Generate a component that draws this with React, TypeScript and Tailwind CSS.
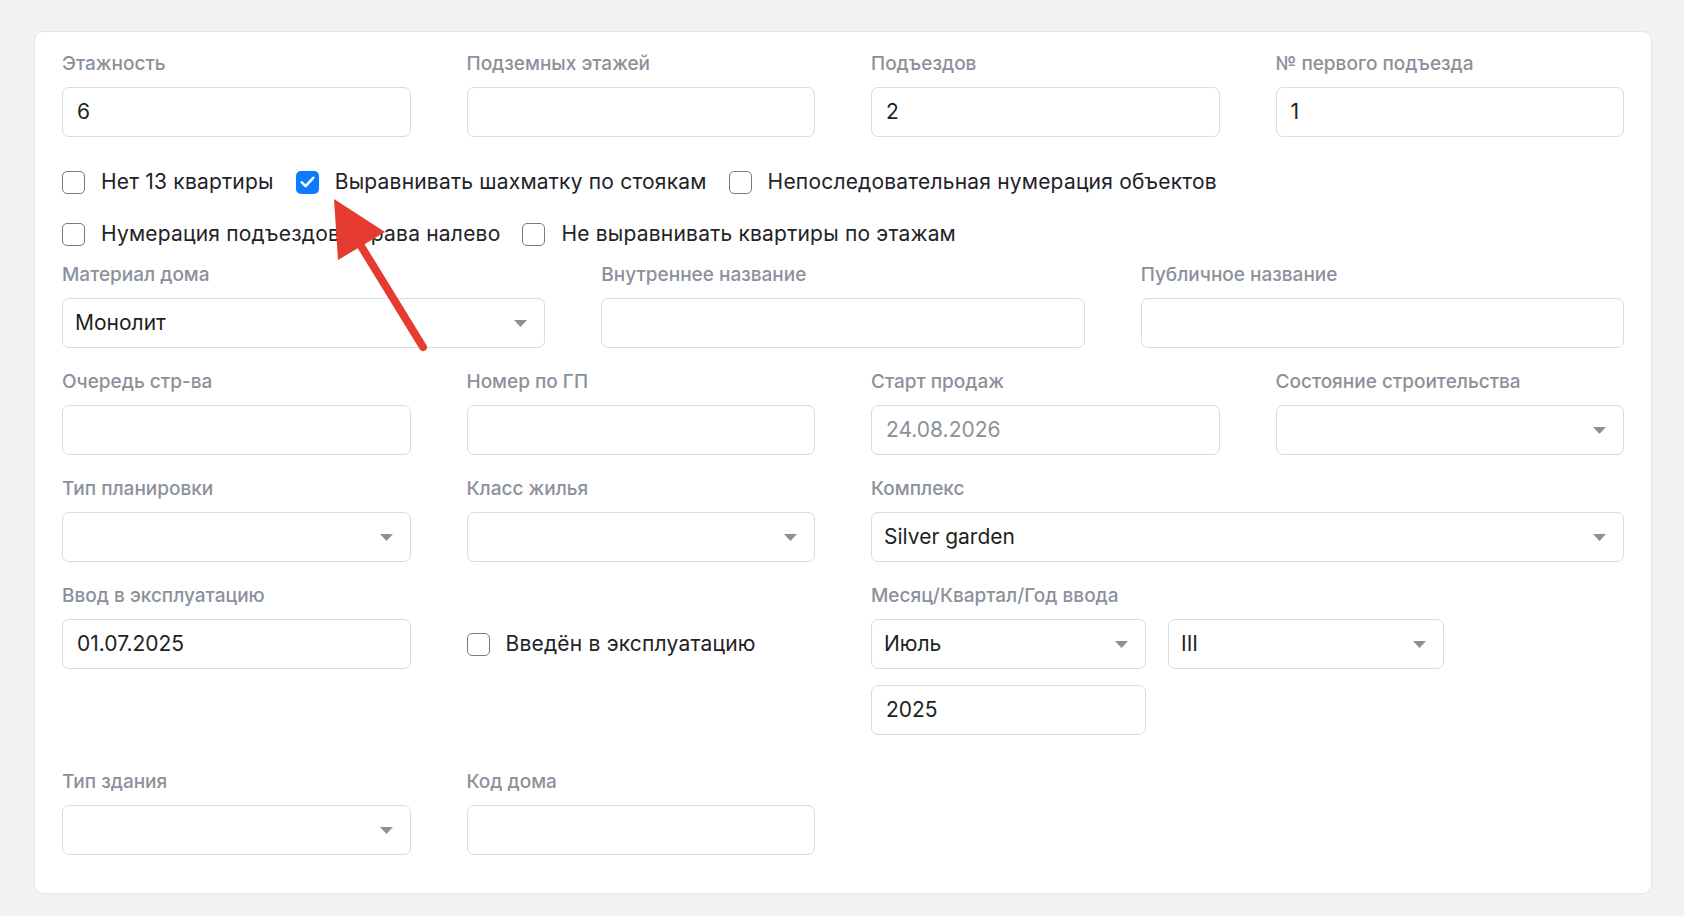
import type { ReactNode } from "react";

const font = { fontFamily: "Inter, 'Noto Sans', sans-serif" };

function Label({ children }: { children: ReactNode }) {
    return <div className="text-[19px] leading-[24px] font-medium text-[#8b919b] whitespace-nowrap">{children}</div>;
}

function Input({ value, muted, className = "" }: { value?: string; muted?: boolean; className?: string }) {
    return (
        <div
            className={`h-[50px] rounded-[7px] border-[1.5px] border-[#d9dbdf] bg-white px-[14px] flex items-center text-[21px] ${
                muted ? "text-[#8c9097]" : "text-[#1d1f23]"
            } ${className}`}
        >
            {value}
        </div>
    );
}

function Select({ value, className = "" }: { value?: string; className?: string }) {
    return (
        <div
            className={`h-[50px] rounded-[7px] border-[1.5px] border-[#d9dbdf] bg-white pl-[12px] pr-[17px] flex items-center justify-between text-[21px] text-[#1d1f23] ${className}`}
        >
            <span>{value}</span>
            <svg width="13" height="7" viewBox="0 0 13 7">
                <path d="M0 0h13L6.5 7z" fill="#8b9099" />
            </svg>
        </div>
    );
}

function Field({ label, children, className = "" }: { label: string; children: ReactNode; className?: string }) {
    return (
        <div className={`flex flex-col ${className}`}>
            <Label>{label}</Label>
            <div className="mt-[11px]">{children}</div>
        </div>
    );
}

function Checkbox({ label, checked }: { label: string; checked?: boolean }) {
    return (
        <label className="flex items-center gap-[16px] text-[21px] tracking-[0.2px] text-[#1f2328] whitespace-nowrap">
            {checked ? (
                <span className="w-[23px] h-[23px] rounded-[5px] bg-[#0b7bff] flex items-center justify-center">
                    <svg width="15" height="12" viewBox="0 0 15 12">
                        <path d="M1.8 6.4l3.8 3.7L13.2 1.8" fill="none" stroke="white" strokeWidth="2.6" strokeLinecap="round" strokeLinejoin="round" />
                    </svg>
                </span>
            ) : (
                <span className="w-[23px] h-[23px] rounded-[5px] border-[1.5px] border-[#76797f] bg-white" />
            )}
            <span>{label}</span>
        </label>
    );
}

export default function App() {
    return (
        <div className="relative min-h-screen bg-[#f1f2f4] pt-[31px] pl-[34px]" style={font}>
            <div className="w-[1618px] rounded-[9px] border border-[#e3e5e8] bg-white px-[27px] pt-[20px] pb-[38px]">
                {/* main counts */}
                <div className="grid grid-cols-12 gap-x-[56px]">
                    <Field label="Этажность" className="col-span-3">
                        <Input value="6" />
                    </Field>
                    <Field label="Подземных этажей" className="col-span-3">
                        <Input />
                    </Field>
                    <Field label="Подъездов" className="col-span-3">
                        <Input value="2" />
                    </Field>
                    <Field label="№ первого подъезда" className="col-span-3">
                        <Input value="1" />
                    </Field>
                </div>

                {/* flags */}
                <div className="mt-[29px] flex flex-col gap-[20px]">
                    <div className="h-[32px] flex items-center gap-[22px]">
                        <Checkbox label="Нет 13 квартиры" />
                        <Checkbox label="Выравнивать шахматку по стоякам" checked />
                        <Checkbox label="Непоследовательная нумерация объектов" />
                    </div>
                    <div className="h-[32px] flex items-center gap-[22px]">
                        <Checkbox label="Нумерация подъездов справа налево" />
                        <Checkbox label="Не выравнивать квартиры по этажам" />
                    </div>
                </div>

                <div className="mt-[13px] grid grid-cols-12 gap-x-[56px] gap-y-[22px]">
                    <Field label="Материал дома" className="col-span-4">
                        <Select value="Монолит" />
                    </Field>
                    <Field label="Внутреннее название" className="col-span-4">
                        <Input />
                    </Field>
                    <Field label="Публичное название" className="col-span-4">
                        <Input />
                    </Field>

                    <Field label="Очередь стр-ва" className="col-span-3">
                        <Input />
                    </Field>
                    <Field label="Номер по ГП" className="col-span-3">
                        <Input />
                    </Field>
                    <Field label="Старт продаж" className="col-span-3">
                        <Input value="24.08.2026" muted />
                    </Field>
                    <Field label="Состояние строительства" className="col-span-3">
                        <Select />
                    </Field>

                    <Field label="Тип планировки" className="col-span-3">
                        <Select />
                    </Field>
                    <Field label="Класс жилья" className="col-span-3">
                        <Select />
                    </Field>
                    <Field label="Комплекс" className="col-span-6">
                        <Select value="Silver garden" />
                    </Field>

                    <Field label="Ввод в эксплуатацию" className="col-span-3">
                        <Input value="01.07.2025" />
                    </Field>
                    <div className="col-span-3 pt-[35px]">
                        <div className="h-[50px] flex items-center">
                            <Checkbox label="Введён в эксплуатацию" />
                        </div>
                    </div>
                    <Field label="Месяц/Квартал/Год ввода" className="col-span-6">
                        <div className="flex gap-[22px]">
                            <Select value="Июль" className="w-[275px]" />
                            <Select value="III" className="w-[276px]" />
                        </div>
                        <Input value="2025" className="mt-[16px] w-[275px]" />
                    </Field>
                </div>

                <div className="mt-[35px] grid grid-cols-12 gap-x-[56px]">
                    <Field label="Тип здания" className="col-span-3">
                        <Select />
                    </Field>
                    <Field label="Код дома" className="col-span-3">
                        <Input />
                    </Field>
                </div>
            </div>

            {/* annotation arrow */}
            <svg className="absolute left-0 top-0 pointer-events-none" width="1684" height="916">
                <line x1="361" y1="246" x2="423" y2="347" stroke="#e53b31" strokeWidth="8" strokeLinecap="round" />
                <path d="M334 199L385 232L338 260z" fill="#e53b31" />
            </svg>
        </div>
    );
}
